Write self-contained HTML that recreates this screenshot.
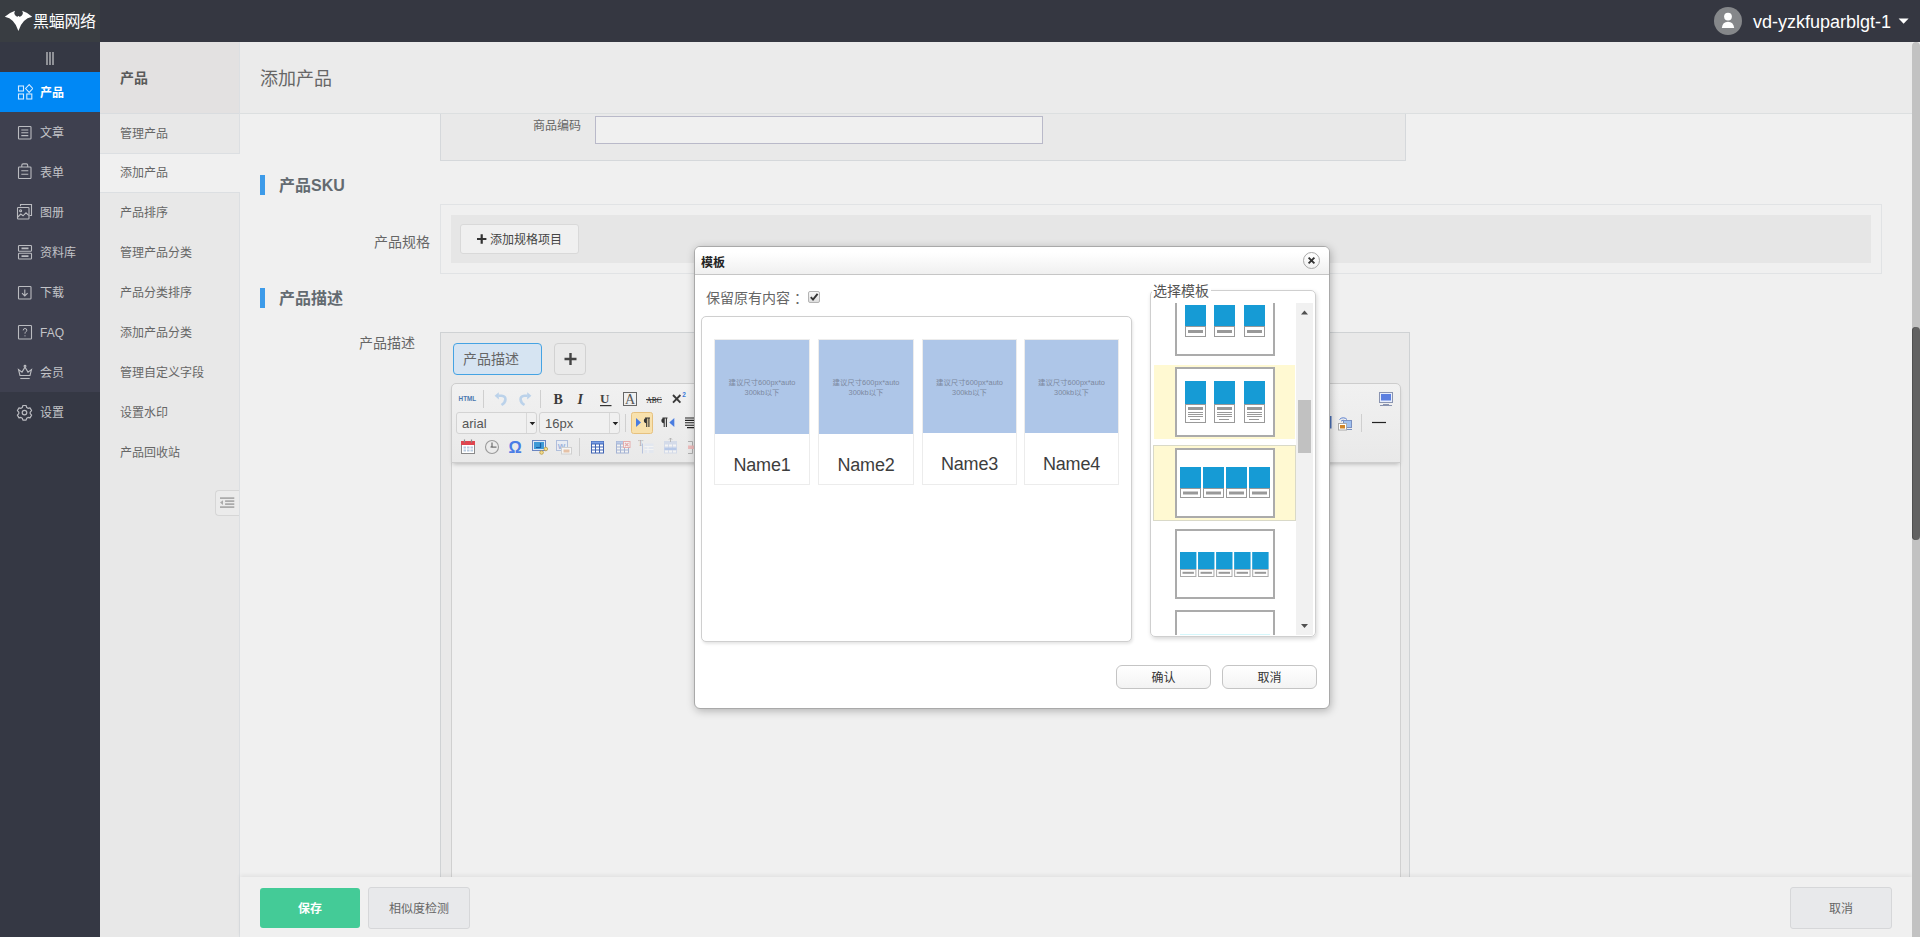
<!DOCTYPE html>
<html lang="zh-CN">
<head>
<meta charset="utf-8">
<title>添加产品</title>
<style>
*{box-sizing:border-box;margin:0;padding:0}
html,body{width:1920px;height:937px;overflow:hidden}
body{font-family:"Liberation Sans","Noto Sans CJK SC",sans-serif;font-size:12px;color:#666;background:#f0f0f0;position:relative}
.abs{position:absolute}
/* header */
#hdr{position:absolute;left:0;top:0;width:1920px;height:42px;background:#353741}
#logo{position:absolute;left:0;top:0;width:100px;height:42px;background:#393d42}
#logo span{position:absolute;left:33px;top:10px;font-size:16px;line-height:24px;color:#fff;letter-spacing:-0.3px}
#user{position:absolute;right:0;top:0;height:42px}
/* nav1 */
#nav1{position:absolute;left:0;top:42px;width:100px;height:895px;background:#353844}
#nav1 .grp{position:absolute;left:0;top:30px;width:100px;height:320px;background:#3e404f}
#nav1 .it{position:absolute;left:0;width:100px;height:40px;color:#c3c4c8;font-size:12px;line-height:42px}
#nav1 .it span{position:absolute;left:40px;top:0}
#nav1 .it svg{position:absolute}
#nav1 .it.on{background:#0088f5;color:#fff;font-weight:bold}
/* nav2 */
#nav2{position:absolute;left:100px;top:42px;width:140px;height:895px;background:#e8e8e8;border-right:1px solid #dcdfe2}
#nav2 .h{position:absolute;left:0;top:0;width:139px;height:72px;background:#e3e1e1;border-bottom:1px solid #d9dcdf;font-weight:bold;font-size:14px;color:#595959;line-height:73px;padding-left:20px}
#nav2 .it{position:absolute;left:0;width:139px;height:40px;line-height:41px;padding-left:20px;font-size:12px;color:#666}
#nav2 .it.on{background:#f0f0f0;width:140px;border-top:1px solid #dcdfe2;border-bottom:1px solid #dcdfe2;line-height:39px}
/* main */
#ttl{z-index:2;position:absolute;left:240px;top:42px;width:1672px;height:72px;background:#ebebeb;border-bottom:1px solid #dcdfe0;font-size:18px;color:#666;line-height:75px;padding-left:20px}

/* panels */
.pnl{position:absolute;background:#e9e9e9;border:1px solid #d5d8db}
.lbl{position:absolute;color:#666;white-space:nowrap}
.sec{position:absolute;left:260px;height:20px;border-left:5px solid #3d9be9;padding-left:14px;font-size:16px;font-weight:bold;color:#636a70;line-height:21px;white-space:nowrap}
.btn{position:absolute;background:#f0f0f0;border:1px solid #d9d9d9;border-radius:3px;color:#444;text-align:center;white-space:nowrap}
/* footer */
#ftr{position:absolute;left:240px;top:877px;width:1672px;height:60px;background:#f0f0f0;box-shadow:0 -2px 4px rgba(0,0,0,.06)}
/* page scrollbar */
#sbar{position:absolute;left:1912px;top:42px;width:8px;height:895px;background:#c2c2c2;border-radius:4px 4px 0 0}
#sbar i{position:absolute;left:0;top:285px;width:8px;height:213px;background:#626262;border-radius:4px;box-shadow:inset 1px 0 0 #505050}

/* dialog */
#dlg{z-index:5;position:absolute;left:694px;top:246px;width:636px;height:463px;background:#fff;border:1px solid #a9a9a9;border-radius:6px;box-shadow:1px 2px 8px rgba(0,0,0,.26);color:#666}
#dlg .tb{position:absolute;left:0;top:0;width:634px;height:28px;border-bottom:1px solid #c6c6c6;border-radius:5px 5px 0 0;background:linear-gradient(#fff 20%,#f0f0f0)}
#dlg .tb b{position:absolute;left:6px;top:6px;font-size:12px;line-height:20px;color:#222}
#dlg .cls{position:absolute;left:608px;top:5px;width:17px;height:17px;border:1px solid #a9a9a9;border-radius:50%;background:linear-gradient(#fff,#f2f2f2)}
#pv{position:absolute;left:6px;top:69px;width:431px;height:326px;border:1px solid #cfcfcf;border-radius:5px;box-shadow:1px 2px 3px rgba(0,0,0,.1);background:#fff}
.card{position:absolute;top:22px;height:146px;border:1px solid #ececec;background:#fff;text-align:center;color:#3d3d3d;font-size:18px}
.card .im{position:absolute;left:0;top:0;right:0;background:#aec6e8;color:#7c889e;font-size:7.4px;line-height:9.5px;font-family:"Liberation Sans","Noto Sans CJK SC",sans-serif}
.card .im p{position:absolute;left:0;right:0;top:38px}
.card .nm{position:absolute;left:0;right:0;top:114px;line-height:22px;letter-spacing:-0.2px}
#fs{position:absolute;left:455px;top:43px;width:166px;height:347px;border:1px solid #cfcfcf;border-radius:5px;box-shadow:1px 2px 4px rgba(0,0,0,.16)}
#fs .lg{position:absolute;left:1px;top:-9px;background:#fff;font-size:14px;line-height:18px;padding:0 2px 0 1px;color:#555}
#sc{position:absolute;left:2px;top:12px;width:161px;height:332px;overflow:hidden}
#sc .trk{position:absolute;left:143px;top:0;width:17px;height:332px;background:#f1f1f1}
#sc .thb{position:absolute;left:145px;top:97px;width:13px;height:53px;background:#c1c1c1}
.tp{position:absolute;left:1px;width:141px;height:74px}
.tp.hl{background:#fff9d2}
.tp.bd{box-shadow:0 0 0 1px #d9d9c8}
.tp .bx{position:absolute;left:21px;top:2px;width:100px;height:70px;border:2px solid #ababab;background:#fff}
.dbtn{position:absolute;top:418px;width:95px;height:24px;border:1px solid #c4c4c4;border-radius:6px;background:linear-gradient(#fff,#f3f3f3);font-size:12px;line-height:24px;text-align:center;color:#333}

/* editor toolbar */
#edt{position:absolute;left:451px;top:383px;width:950px;height:80px;border:1px solid #cdcdcd;border-radius:5px 5px 0 0;background:linear-gradient(#f1f1f1,#e9e9e9);box-shadow:0 3px 4px -2px rgba(0,0,0,.25);z-index:1}
#edt svg{position:absolute;left:0;top:-1px}
#edt text{font-family:"Liberation Serif",serif}
#edt .ss{font-family:"Liberation Sans",sans-serif}

#user{width:220px}
#un{position:absolute;left:53px;top:10px;font-size:18px;line-height:24px;color:#fff;white-space:nowrap}
#tgl{position:absolute;left:46px;top:10px;width:8px;height:13px;border-left:2px solid #8f9197;border-right:2px solid #8f9197}
#tgl i{position:absolute;left:1px;top:0;width:2px;height:13px;background:#8f9197}
#clp{position:absolute;left:115px;top:448px;width:24px;height:26px;border:1px solid #d6d6d6;border-right:none;border-radius:4px 0 0 4px;background:#ebebeb}
</style>
</head>
<body>
<div id="hdr">
  <div id="logo"><svg width="40" height="42" style="position:absolute;left:0;top:0"><path d="M4.800 16.700Q9.500 12.600 15.100 10.800A4.130 4.130 0 1 0 22.100 10.800Q27.700 12.600 32.200 16.700Q22.200 18.500 18.400 30.900Q14.600 18.500 4.800 16.700Z" fill="#fff"/><circle cx="18.500" cy="17" r="1" fill="#fff"/></svg><span>黑蝠网络</span></div>
  <div id="user"><svg width="220" height="42" style="position:absolute;right:0;top:0"><circle cx="28" cy="21" r="14" fill="#85878a"/><circle cx="28" cy="16.600" r="3.900" fill="#fff"/><path d="M21.800 28q.8-6.200 6.200-6.200t6.200 6.200z" fill="#fff"/><path d="M198.600 18.400h10l-5 5.300z" fill="#fff"/></svg><span id="un">vd-yzkfuparblgt-1</span></div>
</div>
<div id="nav1">
  <div id="tgl"><i style="left:1px"></i></div>
  <div class="grp"></div>
  <div class="it on" style="top:30px"><svg width="16" height="17" style="left:17px;top:12px" fill="none" stroke="#d6ebff" stroke-width="1.1"><rect x="1.500" y="2" width="5" height="5"/><rect x="1.500" y="10" width="5" height="5"/><rect x="9.800" y="10" width="5" height="5"/><path d="M12.200 .600l3.600 3.900-3.600 3.900-3.600-3.900z"/></svg><span>产品</span></div>
  <div class="it" style="top:70px"><svg width="16" height="17" style="left:17px;top:12px" fill="none" stroke="#babbc0" stroke-width="1.1"><rect x="1.500" y="2.500" width="12.500" height="12.500" rx=".8"/><path d="M4.300 6h7M4.300 8.800h7M4.300 11.600h7"/></svg><span>文章</span></div>
  <div class="it" style="top:110px"><svg width="16" height="18" style="left:17px;top:9px" fill="none" stroke="#babbc0" stroke-width="1.1"><rect x="1.500" y="6" width="12.500" height="11.500" rx=".8"/><path d="M4.800 6v-1.800q0-1.300 1.300-1.300h3.300q1.300 0 1.300 1.300v1.800M4.300 9.800h7M4.300 13.300h7"/></svg><span>表单</span></div>
  <div class="it" style="top:150px"><svg width="17" height="18" style="left:16px;top:11px" fill="none" stroke="#babbc0" stroke-width="1.1"><path d="M4.500 3.300v-1.800h11v11h-2"/><rect x="1.500" y="4.500" width="11.500" height="11.500" rx=".8"/><circle cx="4.600" cy="7.800" r="1"/><path d="M1.800 14l3-3 2.200 1.800 3-3 2.700 2.500"/></svg><span>图册</span></div>
  <div class="it" style="top:190px"><svg width="16" height="17" style="left:17px;top:12px" fill="none" stroke="#babbc0" stroke-width="1.1"><rect x="1.500" y="1.500" width="13" height="5.800" rx=".8"/><rect x="1.500" y="9.200" width="13" height="5.800" rx=".8"/><path d="M4.500 4.400h7M4.500 12.100h7" stroke-width="1.600"/></svg><span>资料库</span></div>
  <div class="it" style="top:230px"><svg width="16" height="17" style="left:17px;top:12px" fill="none" stroke="#babbc0" stroke-width="1.1"><rect x="1.500" y="2.500" width="12.500" height="12.500" rx=".8"/><path d="M7.800 5.500v6.300M5 9.200l2.800 2.800 2.800-2.800"/></svg><span>下载</span></div>
  <div class="it" style="top:270px"><svg width="16" height="17" style="left:17px;top:12px" fill="none" stroke="#babbc0" stroke-width="1.1"><rect x="1.500" y="1.500" width="13" height="13.500" rx=".8"/><path d="M6.200 6.400q0-1.900 1.800-1.900t1.800 1.700q0 1-1 1.700t-.8 1.700" stroke-width="1"/><circle cx="8" cy="11.800" r=".6" fill="#c3c4c8" stroke="none"/></svg><span>FAQ</span></div>
  <div class="it" style="top:310px"><svg width="16" height="17" style="left:17px;top:12px" fill="none" stroke="#babbc0" stroke-width="1.1"><path d="M3 11.500l-1.500-6 3.500 2.600 3-5 3 5 3.500-2.600-1.500 6z"/><path d="M3.300 14.500h9.400"/><circle cx="8" cy="2.300" r=".9"/></svg><span>会员</span></div>
  <div class="it" style="top:350px"><svg width="17" height="17" style="left:16px;top:12px" fill="none" stroke="#babbc0" stroke-width="1.200"><path d="M6.900 1.500h3.200l.6 2 1.300.8 2-.5 1.600 2.800-1.400 1.500v1.500l1.400 1.500-1.600 2.800-2-.5-1.300.8-.6 2h-3.200l-.6-2-1.300-.8-2 .5-1.600-2.800 1.400-1.500v-1.500l-1.400-1.500 1.600-2.800 2 .5 1.300-.8z" stroke-linejoin="round"/><circle cx="8.500" cy="8.600" r="2.300"/></svg><span>设置</span></div>
</div>
<div id="nav2">
  <div class="h">产品</div>
  <div class="it" style="top:72px">管理产品</div>
  <div class="it on" style="top:111px">添加产品</div>
  <div class="it" style="top:151px">产品排序</div>
  <div class="it" style="top:191px">管理产品分类</div>
  <div class="it" style="top:231px">产品分类排序</div>
  <div class="it" style="top:271px">添加产品分类</div>
  <div class="it" style="top:311px">管理自定义字段</div>
  <div class="it" style="top:351px">设置水印</div>
  <div class="it" style="top:391px">产品回收站</div>
  <div id="clp"><svg width="24" height="26" style="position:absolute;left:0;top:0"><path d="M4 7.100h14.300M9.100 10.100h9.200M9.100 13.100h9.200M4 16.100h14.300" stroke="#ababab" stroke-width="1.800"/><path d="M7 9.200l-3 2.400 3 2.400z" fill="#ababab"/></svg></div>
</div>
<div id="ttl">添加产品</div>

<!-- top panel : 商品编码 -->
<div class="pnl" style="left:440px;top:100px;width:966px;height:61px;border-top:none"></div>
<div class="lbl" style="left:533px;top:117px;font-size:12px;line-height:18px">商品编码</div>
<div class="abs" style="left:595px;top:116px;width:448px;height:28px;background:#f0f0f0;border:1px solid #b9b9c9"></div>

<div class="sec" style="top:175px">产品SKU</div>
<div class="pnl" style="left:440px;top:204px;width:1442px;height:70px;background:#f0f0f0;border-color:#e1e3e5"></div>
<div class="abs" style="left:451px;top:215px;width:1420px;height:48px;background:#e6e6e6"></div>
<div class="lbl" style="left:374px;top:232px;font-size:14px;line-height:20px">产品规格</div>
<div class="btn" style="left:460px;top:224px;width:119px;height:30px;font-size:12px;line-height:30px"><svg width="10" height="10" style="position:absolute;left:16px;top:9px"><path d="M0 5h9.400M4.700 .3v9.400" stroke="#333" stroke-width="2.200"/></svg><span style="position:absolute;left:29px;top:0">添加规格项目</span></div>

<div class="sec" style="top:288px">产品描述</div>
<div class="lbl" style="left:359px;top:333px;font-size:14px;line-height:20px">产品描述</div>
<div class="pnl" id="edp" style="left:440px;top:332px;width:970px;height:560px;border-color:#cfd2d4"></div>
<div class="abs" style="left:453px;top:343px;width:89px;height:32px;background:#d6e4f2;border:1px solid #45a3e3;border-radius:4px;font-size:14px;line-height:30px;padding-left:9px;color:#666">产品描述</div>
<div class="abs" style="left:554px;top:343px;width:32px;height:32px;background:#eaeaea;border:1px solid #d2d2d2;border-radius:4px"><svg width="30" height="30" style="position:absolute;left:0;top:0"><path d="M9.5 15h12M15.5 9v12" stroke="#444" stroke-width="2.4"/></svg></div>
<!-- editor -->
<div id="edt"><svg width="949" height="80" viewBox="452 383 949 80">
<!-- row 1 -->
<text class="ss" x="458.6" y="401.2" font-size="7.2" font-weight="bold" fill="#4a78b0" textLength="17.6" lengthAdjust="spacingAndGlyphs">HTML</text>
<path d="M483.5 390v18M540.5 390v18M625.5 414v18M579.5 438v18M1361.5 414v18" stroke="#cfcfcf" stroke-width="1"/>
<g fill="none" stroke="#bbd2ea" stroke-width="2.6" stroke-linecap="butt">
 <path d="M501.5 405c5-3 5.5-9 0-9.3h-3"/><path d="M498.8 392.2l-4.2 3.6 4.2 3.6z" fill="#bbd2ea" stroke="none"/>
 <path d="M524.5 405c-5-3-5.5-9 0-9.3h3"/><path d="M527.2 392.2l4.2 3.6-4.2 3.6z" fill="#bbd2ea" stroke="none"/>
</g>
<text x="553.6" y="403.6" font-size="14" font-weight="bold" fill="#3a3a3a">B</text>
<text x="577.6" y="403.6" font-size="14" font-weight="bold" font-style="italic" fill="#3a3a3a">I</text>
<text x="600" y="403.4" font-size="13" font-weight="bold" fill="#444">U</text><path d="M600 405.600h11.500" stroke="#333" stroke-width="1.200"/>
<rect x="623.5" y="392.5" width="13" height="13" fill="none" stroke="#666" stroke-width="1"/><text x="625" y="404.3" font-size="14" fill="#555">A</text>
<text x="646.5" y="402.8" font-size="8.3" fill="#111" textLength="15" lengthAdjust="spacingAndGlyphs">ABC</text><path d="M646 399.6h16" stroke="#333" stroke-width="1"/>
<path d="M673 395l7.4 7.6M680.4 395l-7.4 7.600" stroke="#3a3a3a" stroke-width="1.9" fill="none"/><text class="ss" x="682.3" y="396.8" font-size="6.5" font-weight="bold" fill="#3b78d8">2</text>
<!-- fullscreen -->
<rect x="1379.5" y="392.500" width="13" height="10" fill="#e8eefc" stroke="#8a94b0" stroke-width="1"/><rect x="1381" y="394" width="10" height="6.500" fill="#5b7fe0"/><path d="M1383 404.500h6M1380 405.5h12" stroke="#8a94b0" stroke-width="1"/>
<!-- row 2 -->
<g fill="#f0f0f0" stroke="#d3d3d3"><rect x="456.500" y="412.500" width="80" height="21" rx="2.500"/><rect x="539.5" y="412.500" width="80" height="21" rx="2.500"/></g>
<path d="M526.5 413v20M609.5 413v20" stroke="#d8d8d8"/>
<path d="M529.6 422h5.600l-2.800 3.200zM612.6 422h5.600l-2.800 3.200z" fill="#222"/>
<text class="ss" x="462" y="427.600" font-size="13" fill="#555">arial</text>
<text class="ss" x="545" y="427.600" font-size="13" fill="#555">16px</text>
<rect x="631.5" y="412.500" width="21" height="21" rx="2" fill="#f8e1ad" stroke="#e6c17f"/>
<path d="M636 418l5 4.500-5 4.500z" fill="#4a7de0"/>
<path d="M645 418h5M646.7 418v9M648.9 418v9" stroke="#333" stroke-width="1.100" fill="none"/><path d="M646.5 418a2.600 2.600 0 0 0 0 5.200z" fill="#333"/>
<path d="M662.500 418h5M664.2 418v9M666.4 418v9" stroke="#333" stroke-width="1.100" fill="none"/><path d="M664 418a2.600 2.600 0 0 0 0 5.200z" fill="#333"/>
<path d="M674.3 418l-5 4.500 5 4.500z" fill="#4a7de0"/>
<path d="M685 418h10M685 420.400h9M685 422.800h10M685 425.200h9M687 427.600h10" stroke="#222" stroke-width="1.100"/>
<!-- right side row 2 -->
<rect x="1329.500" y="416" width="2" height="12.500" fill="#4a6fb5"/>
<g><path d="M1339.500 419.500a5 5 0 0 1 7.500 0M1341 421.300a3 3 0 0 1 4.500 0" stroke="#5a7fd0" stroke-width="1" fill="none"/>
<rect x="1343.500" y="420.500" width="8" height="7" fill="#9fc0f0" stroke="#7a90c0"/><path d="M1345 429.500h7" stroke="#7a90c0"/>
<rect x="1338.500" y="423.500" width="8" height="6.500" fill="#fff" stroke="#aaa"/><rect x="1340" y="425" width="5" height="3.500" fill="#d0852a"/></g>
<path d="M1372 422.500h14" stroke="#222" stroke-width="1.200"/>
<!-- row 3 -->
<g><rect x="461.500" y="441.500" width="13" height="12" fill="#fff" stroke="#8a8a8a"/><rect x="461" y="441" width="14" height="4" fill="#e0454f"/><path d="M464.500 439.500v3M471.500 439.500v3" stroke="#888" stroke-width="1.200"/>
<g fill="#b9cbe0"><rect x="463.500" y="446.500" width="2.500" height="2"/><rect x="467" y="446.500" width="2.500" height="2"/><rect x="470.500" y="446.500" width="2.500" height="2"/><rect x="463.500" y="449.500" width="2.500" height="2"/><rect x="467" y="449.500" width="2.500" height="2"/><rect x="470.500" y="449.500" width="2.500" height="2"/></g></g>
<circle cx="492" cy="447" r="6.500" fill="#ebebeb" stroke="#9a9a9a" stroke-width="1.100"/><path d="M492 442.500v4.600h4.500M490.500 447h1.500" stroke="#555" stroke-width="1" fill="none"/>
<text class="ss" x="508.600" y="453" font-size="16.500" font-weight="bold" fill="#4a7de6">Ω</text>
<g><rect x="532.500" y="440.500" width="13" height="10" fill="#dfe8f6" stroke="#6a86c0"/><rect x="534" y="442" width="10" height="7" fill="#3f9ad6"/><path d="M536 447.500h4.500v-4.500" stroke="#1c5fa5" stroke-width="1.200" fill="none"/><circle cx="545.800" cy="449" r="1.800" fill="#f4dc8a" stroke="#b99a45" stroke-width=".8"/><circle cx="541.600" cy="452.500" r="1.800" fill="#f4dc8a" stroke="#b99a45" stroke-width=".8"/></g>
<g opacity=".55"><rect x="556.500" y="440.500" width="11" height="10" fill="#e6eefb" stroke="#7f9bd0"/><text class="ss" x="557.800" y="449" font-size="8" font-weight="bold" fill="#5f86d0">W</text><rect x="561.500" y="447.500" width="10" height="6.500" fill="#fff" stroke="#bbb"/><rect x="563.500" y="449.500" width="6" height="3" fill="#e2a070"/></g>
<g opacity="1"><rect x="591" y="441" width="13" height="12.5" fill="#3f63b3"/><rect x="591.5" y="441.5" width="12" height="2" fill="#7aa0e6"/><rect x="592" y="444.5" width="3" height="2" fill="#fff"/><rect x="596" y="444.5" width="3" height="2" fill="#fff"/><rect x="600" y="444.5" width="3" height="2" fill="#fff"/><rect x="592" y="447.5" width="3" height="2" fill="#fff"/><rect x="596" y="447.5" width="3" height="2" fill="#fff"/><rect x="600" y="447.5" width="3" height="2" fill="#fff"/><rect x="592" y="450.5" width="3" height="2" fill="#fff"/><rect x="596" y="450.5" width="3" height="2" fill="#fff"/><rect x="600" y="450.5" width="3" height="2" fill="#fff"/></g>
<g opacity=".4"><g opacity="1"><rect x="616" y="441" width="13" height="12.5" fill="#3f63b3"/><rect x="616.5" y="441.5" width="12" height="2" fill="#7aa0e6"/><rect x="617" y="444.5" width="3" height="2" fill="#fff"/><rect x="621" y="444.5" width="3" height="2" fill="#fff"/><rect x="625" y="444.5" width="3" height="2" fill="#fff"/><rect x="617" y="447.5" width="3" height="2" fill="#fff"/><rect x="621" y="447.5" width="3" height="2" fill="#fff"/><rect x="625" y="447.5" width="3" height="2" fill="#fff"/><rect x="617" y="450.5" width="3" height="2" fill="#fff"/><rect x="621" y="450.5" width="3" height="2" fill="#fff"/><rect x="625" y="450.5" width="3" height="2" fill="#fff"/></g><rect x="623.500" y="441.500" width="6.500" height="6" fill="#fff" stroke="#e05050"/><path d="M625 443l3.500 3.200M628.500 443l-3.500 3.200" stroke="#e05050" stroke-width="1.200"/></g>
<g opacity=".45"><text x="638" y="446.300" font-size="8.500" fill="#555">T</text><path d="M642.500 443.500v10" stroke="#7a96d0"/><rect x="644.500" y="443.500" width="9" height="9.500" fill="#dbe5f7"/><path d="M644.500 446.500h9M644.500 449.500h9M648 446.500v6.500" stroke="#fff" stroke-width="1"/></g>
<g opacity=".45"><g opacity="1"><rect x="664" y="441" width="13" height="12.5" fill="#b9c8e8"/><rect x="664.5" y="441.5" width="12" height="2" fill="#b9c8e8"/><rect x="665" y="444.5" width="3" height="2" fill="#fff"/><rect x="669" y="444.5" width="3" height="2" fill="#fff"/><rect x="673" y="444.5" width="3" height="2" fill="#fff"/><rect x="665" y="447.5" width="3" height="2" fill="#fff"/><rect x="669" y="447.5" width="3" height="2" fill="#fff"/><rect x="673" y="447.5" width="3" height="2" fill="#fff"/><rect x="665" y="450.5" width="3" height="2" fill="#fff"/><rect x="669" y="450.5" width="3" height="2" fill="#fff"/><rect x="673" y="450.5" width="3" height="2" fill="#fff"/></g><rect x="664.500" y="447.500" width="12" height="2.500" fill="#7aa0e6"/><path d="M670.500 438v4M669 439.600l1.500-1.600 1.500 1.600" stroke="#666" stroke-width=".8" fill="none"/></g>
<g opacity=".5"><path d="M688 441.500h4.500v12h-4.500" stroke="#777" fill="none"/><rect x="688" y="445.500" width="8" height="3.500" fill="#f08f8f"/></g>
</svg></div>
<div class="abs" style="left:451px;top:462px;width:950px;height:420px;background:#f0f0f0;border:1px solid #d0d0d0;border-top:none"></div>

<div id="ftr">
  <div class="abs" style="left:20px;top:11px;width:100px;height:40px;background:#44cb97;border-radius:3px;color:#fff;font-weight:bold;font-size:12px;line-height:42px;text-align:center">保存</div>
  <div class="btn" style="left:128px;top:10px;width:102px;height:42px;background:#e8e9eb;border-color:#d6d7d9;font-size:12px;line-height:42px;color:#666">相似度检测</div>
  <div class="btn" style="left:1550px;top:10px;width:102px;height:42px;background:#e8e9eb;border-color:#d6d7d9;font-size:12px;line-height:42px;color:#666">取消</div>
</div>
<div id="sbar"><i></i></div>
<div id="dlg">
 <div class="tb"><b>模板</b><div class="cls"><svg width="15" height="15" style="position:absolute;left:0;top:0"><path d="M4.6 4.6l5.8 5.8M10.4 4.6l-5.8 5.8" stroke="#333" stroke-width="1.9"/></svg></div></div>
 <div class="lbl" style="left:11px;top:41px;font-size:14px;line-height:20px;color:#666">保留原有内容<span style="position:relative;left:4px">：</span></div>
 <div class="abs" style="left:113px;top:44px;width:12px;height:12px;border:1px solid #b4b4b4;border-radius:2px;background:linear-gradient(#f6f6f6,#dedede)"><svg width="10" height="10" style="position:absolute;left:0;top:0"><path d="M1.800 5.200l2.200 2.400L8.600 1.800" stroke="#333" stroke-width="1.900" fill="none"/></svg></div>
 <div id="pv">
  <div class="card" style="left:12px;width:96px"><div class="im" style="height:94px"><p>建议尺寸600px*auto<br>300kb以下</p></div><div class="nm">Name1</div></div>
  <div class="card" style="left:116px;width:96px"><div class="im" style="height:94px"><p>建议尺寸600px*auto<br>300kb以下</p></div><div class="nm">Name2</div></div>
  <div class="card" style="left:220px;width:95px"><div class="im" style="height:93px"><p>建议尺寸600px*auto<br>300kb以下</p></div><div class="nm" style="top:113px">Name3</div></div>
  <div class="card" style="left:322px;width:95px"><div class="im" style="height:93px"><p>建议尺寸600px*auto<br>300kb以下</p></div><div class="nm" style="top:113px">Name4</div></div>
 </div>
 <div id="fs"><div class="lg">选择模板</div>
  <div id="sc">
   <div class="tp" style="top:-19px"><div class="bx"><svg width="96" height="66" style="position:absolute;left:0;top:0"><rect x="8" y="17" width="21" height="21" fill="#169bd5"/><rect x="8.5" y="38.5" width="20" height="10" fill="#fff" stroke="#999" stroke-width="1"/><rect x="11" y="42" width="15" height="3" fill="#999"/><rect x="37" y="17" width="21" height="21" fill="#169bd5"/><rect x="37.5" y="38.5" width="20" height="10" fill="#fff" stroke="#999" stroke-width="1"/><rect x="40" y="42" width="15" height="3" fill="#999"/><rect x="67" y="17" width="21" height="21" fill="#169bd5"/><rect x="67.5" y="38.5" width="20" height="10" fill="#fff" stroke="#999" stroke-width="1"/><rect x="70" y="42" width="15" height="3" fill="#999"/></svg></div></div>
   <div class="tp hl" style="top:62px"><div class="bx"><svg width="96" height="66" style="position:absolute;left:0;top:0"><rect x="8" y="12" width="21" height="23" fill="#169bd5"/><rect x="8.5" y="35.5" width="20" height="18" fill="#fff" stroke="#999" stroke-width="1"/><rect x="11" y="38" width="15" height="3" fill="#999"/><path d="M11 43.5h15M11 45.5h15M11 47.5h15M13 50.5h10" stroke="#999" stroke-width="1"/><rect x="37" y="12" width="21" height="23" fill="#169bd5"/><rect x="37.5" y="35.5" width="20" height="18" fill="#fff" stroke="#999" stroke-width="1"/><rect x="40" y="38" width="15" height="3" fill="#999"/><path d="M40 43.5h15M40 45.5h15M40 47.5h15M42 50.5h10" stroke="#999" stroke-width="1"/><rect x="67" y="12" width="21" height="23" fill="#169bd5"/><rect x="67.5" y="35.5" width="20" height="18" fill="#fff" stroke="#999" stroke-width="1"/><rect x="70" y="38" width="15" height="3" fill="#999"/><path d="M70 43.5h15M70 45.5h15M70 47.5h15M72 50.5h10" stroke="#999" stroke-width="1"/></svg></div></div>
   <div class="tp hl bd" style="top:143px"><div class="bx"><svg width="96" height="66" style="position:absolute;left:0;top:0"><rect x="3" y="17" width="21" height="21" fill="#169bd5"/><rect x="3.5" y="38.5" width="20" height="9" fill="#fff" stroke="#999" stroke-width="1"/><rect x="6" y="41.5" width="15" height="3" fill="#999"/><rect x="26" y="17" width="21" height="21" fill="#169bd5"/><rect x="26.5" y="38.5" width="20" height="9" fill="#fff" stroke="#999" stroke-width="1"/><rect x="29" y="41.5" width="15" height="3" fill="#999"/><rect x="49" y="17" width="21" height="21" fill="#169bd5"/><rect x="49.5" y="38.5" width="20" height="9" fill="#fff" stroke="#999" stroke-width="1"/><rect x="52" y="41.5" width="15" height="3" fill="#999"/><rect x="72" y="17" width="21" height="21" fill="#169bd5"/><rect x="72.5" y="38.5" width="20" height="9" fill="#fff" stroke="#999" stroke-width="1"/><rect x="75" y="41.5" width="15" height="3" fill="#999"/></svg></div></div>
   <div class="tp" style="top:224px"><div class="bx"><svg width="96" height="66" style="position:absolute;left:0;top:0"><rect x="3.0" y="21" width="16.4" height="17" fill="#169bd5"/><rect x="3.5" y="38.5" width="15.4" height="7" fill="#fff" stroke="#aaa" stroke-width="1"/><rect x="5.5" y="40.800" width="11.400" height="2" fill="#999"/><rect x="21.05" y="21" width="16.4" height="17" fill="#169bd5"/><rect x="21.55" y="38.5" width="15.4" height="7" fill="#fff" stroke="#aaa" stroke-width="1"/><rect x="23.55" y="40.800" width="11.400" height="2" fill="#999"/><rect x="39.1" y="21" width="16.4" height="17" fill="#169bd5"/><rect x="39.6" y="38.5" width="15.4" height="7" fill="#fff" stroke="#aaa" stroke-width="1"/><rect x="41.6" y="40.800" width="11.400" height="2" fill="#999"/><rect x="57.15" y="21" width="16.4" height="17" fill="#169bd5"/><rect x="57.65" y="38.5" width="15.4" height="7" fill="#fff" stroke="#aaa" stroke-width="1"/><rect x="59.65" y="40.800" width="11.400" height="2" fill="#999"/><rect x="75.2" y="21" width="16.4" height="17" fill="#169bd5"/><rect x="75.7" y="38.5" width="15.4" height="7" fill="#fff" stroke="#aaa" stroke-width="1"/><rect x="77.7" y="40.800" width="11.400" height="2" fill="#999"/></svg></div></div>
   <div class="tp" style="top:305px"><div class="bx"><svg width="96" height="66" style="position:absolute;left:0;top:0"><rect x="3" y="22" width="90" height="2" fill="#d5f7fb"/></svg></div></div>
   <div class="trk"></div><div class="thb"></div>
   <svg width="17" height="333" style="position:absolute;left:143px;top:0"><path d="M5 11.5h7L8.5 7.5z M5 321h7l-3.5 4z" fill="#505050"/></svg>
  </div>
 </div>
 <div class="dbtn" style="left:421px">确认</div>
 <div class="dbtn" style="left:527px">取消</div>
</div>
</body>
</html>
